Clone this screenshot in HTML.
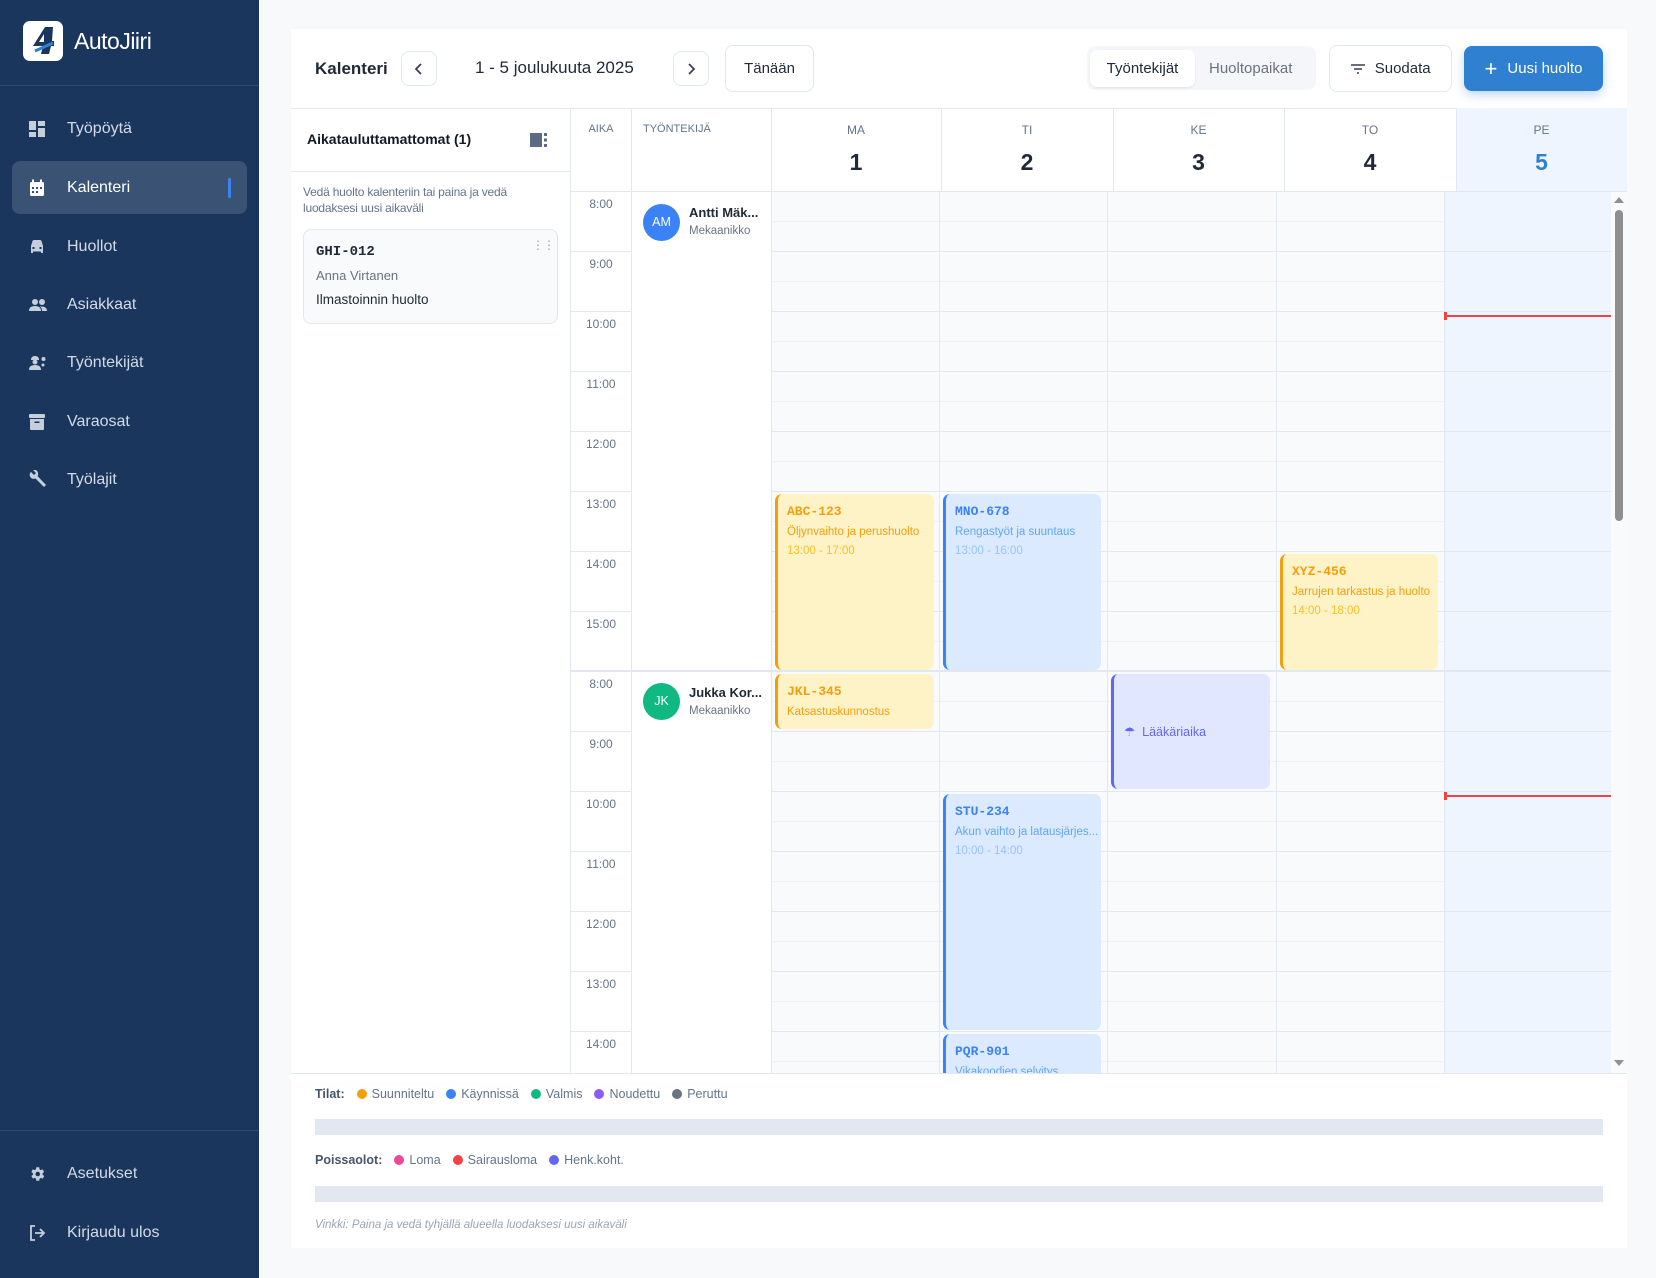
<!DOCTYPE html>
<html><head><meta charset="utf-8"><style>
*{box-sizing:border-box;margin:0;padding:0}
body{width:1656px;height:1278px;background:#f7f9fb;font-family:"Liberation Sans",sans-serif;position:relative;overflow:hidden;color:#1f2937}
.a{position:absolute}
.sb{left:0;top:0;width:259px;height:1278px;background:#1b365d}
.nav{position:absolute;left:12px;width:235px;height:53px;display:flex;align-items:center;color:#d3dbe6;font-size:16px}
.nav svg{position:absolute;left:16px}
.nav span{position:absolute;left:55px}
.btn{position:absolute;border:1px solid #e2e8f0;border-radius:8px;background:#fff;display:flex;align-items:center;justify-content:center;font-size:15px;color:#1f2937}
.hl{position:absolute;font-size:12px;color:#64748b;text-align:center}
.dn{position:absolute;font-size:23px;font-weight:bold;color:#1f2937;text-align:center}
.tl{position:absolute;left:571px;width:60px;text-align:center;font-size:12px;color:#64748b}
.ev{position:absolute;border-radius:7px;border-left:3px solid;padding:10px 0 0 9px;overflow:hidden;white-space:nowrap}
.ev b{display:block;font-family:"Liberation Mono",monospace;font-size:13px;margin-bottom:7px}
.ev i{display:block;font-style:normal;font-size:11.5px;margin-bottom:7px}
.dot{display:inline-block;width:10px;height:10px;border-radius:50%;margin:0 5px 0 12px;vertical-align:-1px}
.lg{font-size:12.5px;color:#64748b}
</style></head><body>
<div class="a sb"></div>
<div class="a" style="left:23px;top:21px;width:40px;height:40px;background:#fff;border-radius:7px"></div>
<svg class="a" style="left:23px;top:21px" width="40" height="40" viewBox="0 0 40 40"><path d="M22 6 L10 25 L20 25 L18 33 L26 33 L28 25 L31 25 L31 20 L29 20 L30 6 Z" fill="#1b365d"/><path d="M21 13 L16 21 L21 21 Z" fill="#fff"/><path d="M12 30 L30 22" stroke="#2f80d0" stroke-width="3"/></svg>
<div class="a" style="left:74px;top:28px;color:#fff;font-size:23px;font-weight:500;letter-spacing:-.5px">AutoJiiri</div>
<div class="a" style="left:0;top:85px;width:259px;height:1px;background:#2e4a70"></div>
<div class="nav" style="top:102px"><svg width="18" height="18" viewBox="0 0 18 18" fill="#c5cfdc"><rect x="1" y="1" width="7" height="9"/><rect x="10" y="1" width="7" height="5"/><rect x="10" y="8" width="7" height="9"/><rect x="1" y="12" width="7" height="5"/></svg><span>Työpöytä</span></div>
<div class="nav" style="top:161px;background:#3a5274;border-radius:8px;color:#fff"><svg width="18" height="18" viewBox="0 0 18 18" fill="#fff"><rect x="2" y="3" width="14" height="14" rx="1.5"/><rect x="4" y="0.5" width="2" height="4"/><rect x="12" y="0.5" width="2" height="4"/><g fill="#3a5274"><rect x="4" y="8" width="2" height="2"/><rect x="8" y="8" width="2" height="2"/><rect x="12" y="8" width="2" height="2"/><rect x="4" y="12" width="2" height="2"/><rect x="8" y="12" width="2" height="2"/></g></svg><span>Kalenteri</span><div class="a" style="left:216px;top:17px;width:3px;height:20px;background:#3b82f6;border-radius:2px"></div></div>
<div class="nav" style="top:220px"><svg width="18" height="18" viewBox="0 0 18 18" fill="#c5cfdc"><path d="M3 8 L4.5 3 Q5 2 6 2 H12 Q13 2 13.5 3 L15 8 V15 H13 V13.5 H5 V15 H3 Z"/><rect x="4.5" y="9" width="2" height="2" fill="#1b365d"/><rect x="11.5" y="9" width="2" height="2" fill="#1b365d"/></svg><span>Huollot</span></div>
<div class="nav" style="top:278px"><svg width="20" height="18" viewBox="0 0 20 18" fill="#c5cfdc"><circle cx="7" cy="6" r="3"/><circle cx="14" cy="6" r="3"/><path d="M1 15 Q1 10 7 10 Q13 10 13 15Z M12 10.5 Q19 10 19 15 H14 Q14 12 12 10.5Z"/></svg><span>Asiakkaat</span></div>
<div class="nav" style="top:336px"><svg width="20" height="18" viewBox="0 0 20 18" fill="#c5cfdc"><path d="M3 6 Q3 2 7 2 Q11 2 11 6Z"/><circle cx="7" cy="8" r="2.5"/><path d="M1 16 Q1 11 7 11 Q13 11 13 16Z"/><circle cx="15.5" cy="5" r="2"/><circle cx="15" cy="11" r="1.5"/></svg><span>Työntekijät</span></div>
<div class="nav" style="top:395px"><svg width="18" height="18" viewBox="0 0 18 18" fill="#c5cfdc"><rect x="1" y="1" width="16" height="4" rx="1"/><path d="M2 6 H16 V16 Q16 17 15 17 H3 Q2 17 2 16Z"/><rect x="6.5" y="8.5" width="5" height="1.5" fill="#1b365d"/></svg><span>Varaosat</span></div>
<div class="nav" style="top:453px"><svg width="20" height="20" viewBox="0 0 20 20" fill="#c5cfdc"><path d="M3 2 L6 5 L8 3 L5 0 Q9 -1 10 3 Q10.5 5 9.5 6 L18 15 L16 17 L7.5 8.5 Q5 9.5 3 8 Q1 6 2 3Z"/></svg><span>Työlajit</span></div>
<div class="a" style="left:0;top:1130px;width:259px;height:1px;background:#2e4a70"></div>
<div class="nav" style="top:1147px"><svg width="18" height="18" viewBox="0 0 24 24" fill="#c5cfdc"><path d="M19.4 13a7.5 7.5 0 0 0 0-2l2.1-1.6-2-3.5-2.5 1a7 7 0 0 0-1.7-1L15 3h-4l-.4 2.9a7 7 0 0 0-1.7 1l-2.5-1-2 3.5L6.6 11a7.5 7.5 0 0 0 0 2l-2.1 1.6 2 3.5 2.5-1a7 7 0 0 0 1.7 1L11 21h4l.4-2.9a7 7 0 0 0 1.7-1l2.5 1 2-3.5Z"/><circle cx="13" cy="12" r="3" fill="#1b365d"/></svg><span>Asetukset</span></div>
<div class="nav" style="top:1206px"><svg width="18" height="18" viewBox="0 0 18 18" fill="none" stroke="#c5cfdc" stroke-width="1.8"><path d="M7 2 H3 V16 H7"/><path d="M7 9 H16 M12 5 L16 9 L12 13"/></svg><span>Kirjaudu ulos</span></div>

<!-- main panel -->
<div class="a" style="left:291px;top:29px;width:1336px;height:1219px;background:#fff"></div>
<div class="a" style="left:315px;top:59px;font-size:17px;font-weight:bold">Kalenteri</div>
<div class="btn" style="left:401px;top:51px;width:36px;height:35px"><svg width="10" height="14" viewBox="0 0 10 14" fill="none" stroke="#374151" stroke-width="1.8"><path d="M7 2 L2 7 L7 12"/></svg></div>
<div class="a" style="left:475px;top:58px;font-size:17px;font-weight:500">1 - 5 joulukuuta 2025</div>
<div class="btn" style="left:673px;top:51px;width:36px;height:35px"><svg width="10" height="14" viewBox="0 0 10 14" fill="none" stroke="#374151" stroke-width="1.8"><path d="M3 2 L8 7 L3 12"/></svg></div>
<div class="btn" style="left:725px;top:45px;width:89px;height:47px">Tänään</div>
<div class="a" style="left:1087px;top:46px;width:229px;height:44px;background:#f4f6f9;border-radius:8px"></div>
<div class="a" style="left:1090px;top:50px;width:105px;height:37px;background:#fff;border-radius:7px;box-shadow:0 1px 2px rgba(0,0,0,.08);font-size:15px;text-align:center;line-height:37px">Työntekijät</div>
<div class="a" style="left:1209px;top:50px;font-size:15px;line-height:37px;color:#6b7280">Huoltopaikat</div>
<div class="btn" style="left:1329px;top:45px;width:123px;height:47px"><svg width="16" height="12" viewBox="0 0 16 12" stroke="#374151" stroke-width="1.6"><path d="M1 2H15M4 6H12M7 10H9"/></svg>&nbsp;&nbsp;Suodata</div>
<div class="a" style="left:1464px;top:46px;width:139px;height:45px;background:#2f80d0;border-radius:8px;color:#fff;font-size:15px;display:flex;align-items:center;justify-content:center;box-shadow:0 4px 10px rgba(47,128,208,.3)"><span style="font-size:22px;font-weight:300;margin-right:10px;line-height:1">+</span>Uusi huolto</div>
<div class="a" style="left:291px;top:108px;width:1336px;height:1px;background:#e2e8f0"></div>

<!-- left panel -->
<div class="a" style="left:570px;top:108px;width:1px;height:965px;background:#e2e8f0"></div>
<div class="a" style="left:307px;top:131px;font-size:14px;font-weight:bold;color:#111827">Aikatauluttamattomat (1)</div>
<svg class="a" style="left:530px;top:133px" width="18" height="14" viewBox="0 0 18 14" fill="#5b6b82"><rect x="0" y="0" width="12" height="14"/><rect x="14" y="0" width="3" height="3"/><rect x="14" y="5.5" width="3" height="3"/><rect x="14" y="11" width="3" height="3"/></svg>
<div class="a" style="left:291px;top:171px;width:280px;height:1px;background:#e2e8f0"></div>
<div class="a" style="left:303px;top:184px;font-size:12px;color:#64748b;line-height:16px;width:250px;letter-spacing:-.2px">Vedä huolto kalenteriin tai paina ja vedä luodaksesi uusi aikaväli</div>
<div class="a" style="left:303px;top:229px;width:255px;height:95px;border:1px solid #e2e8f0;border-radius:8px;background:#f8fafc"></div>
<div class="a" style="left:316px;top:244px;font-family:'Liberation Mono',monospace;font-weight:bold;font-size:14px;color:#1f2937">GHI-012</div>
<div class="a" style="left:532px;top:242px;font-size:12px;color:#9ca3af;letter-spacing:-1px;line-height:6px">⋮⋮</div>
<div class="a" style="left:316px;top:268px;font-size:13px;color:#6b7280">Anna Virtanen</div>
<div class="a" style="left:316px;top:292px;font-size:13.5px;color:#1f2937">Ilmastoinnin huolto</div>

<!-- header -->
<div class="a" style="left:631px;top:108px;width:1px;height:965px;background:#e2e8f0"></div>
<div class="a" style="left:771px;top:108px;width:1px;height:84px;background:#e2e8f0"></div>
<div class="a" style="left:941px;top:108px;width:1px;height:84px;background:#e2e8f0"></div>
<div class="a" style="left:1113px;top:108px;width:1px;height:84px;background:#e2e8f0"></div>
<div class="a" style="left:1284px;top:108px;width:1px;height:84px;background:#e2e8f0"></div>
<div class="a" style="left:1456px;top:108px;width:171px;height:84px;background:#eef5fe;border-left:1px solid #e2e8f0"></div>
<div class="hl" style="left:571px;top:123px;width:60px;font-size:11px">AIKA</div>
<div class="hl" style="left:643px;top:123px;font-size:11px">TYÖNTEKIJÄ</div>
<div class="hl" style="left:771px;top:123px;width:170px">MA</div><div class="dn" style="left:771px;top:149px;width:170px">1</div>
<div class="hl" style="left:941px;top:123px;width:172px">TI</div><div class="dn" style="left:941px;top:149px;width:172px">2</div>
<div class="hl" style="left:1113px;top:123px;width:171px">KE</div><div class="dn" style="left:1113px;top:149px;width:171px">3</div>
<div class="hl" style="left:1284px;top:123px;width:172px">TO</div><div class="dn" style="left:1284px;top:149px;width:172px">4</div>
<div class="hl" style="left:1456px;top:123px;width:171px">PE</div><div class="dn" style="left:1456px;top:149px;width:171px;color:#2f80d0">5</div>
<div class="a" style="left:571px;top:191px;width:1056px;height:1px;background:#e2e8f0"></div>

<!-- grid body -->
<div class="a" style="left:771px;top:192px;width:840px;height:881px;background-color:#f8fafc;background-image:repeating-linear-gradient(to bottom,transparent 0,transparent 29px,#eef1f5 29px,#eef1f5 30px,transparent 30px,transparent 59px,#e2e8f0 59px,#e2e8f0 60px)"></div>
<div class="a" style="left:1444px;top:192px;width:167px;height:881px;background-color:#eef5fe;background-image:repeating-linear-gradient(to bottom,transparent 0,transparent 59px,#e2e8f0 59px,#e2e8f0 60px)"></div>
<div class="a" style="left:571px;top:192px;width:60px;height:881px;background-image:repeating-linear-gradient(to bottom,transparent 0,transparent 59px,#e2e8f0 59px,#e2e8f0 60px)"></div>
<div class="a" style="left:771px;top:192px;width:1px;height:881px;background:#e2e8f0"></div>
<div class="a" style="left:939px;top:192px;width:1px;height:881px;background:#e2e8f0"></div>
<div class="a" style="left:1107px;top:192px;width:1px;height:881px;background:#e2e8f0"></div>
<div class="a" style="left:1276px;top:192px;width:1px;height:881px;background:#e2e8f0"></div>
<div class="a" style="left:1444px;top:192px;width:1px;height:881px;background:#e2e8f0"></div>
<div class="a" style="left:571px;top:670px;width:1040px;height:2px;background:#e2e8f0"></div>

<div class="tl" style="top:197px">8:00</div><div class="tl" style="top:257px">9:00</div><div class="tl" style="top:317px">10:00</div><div class="tl" style="top:377px">11:00</div><div class="tl" style="top:437px">12:00</div><div class="tl" style="top:497px">13:00</div><div class="tl" style="top:557px">14:00</div><div class="tl" style="top:617px">15:00</div>
<div class="tl" style="top:677px">8:00</div><div class="tl" style="top:737px">9:00</div><div class="tl" style="top:797px">10:00</div><div class="tl" style="top:857px">11:00</div><div class="tl" style="top:917px">12:00</div><div class="tl" style="top:977px">13:00</div><div class="tl" style="top:1037px">14:00</div>

<div class="a" style="left:643px;top:204px;width:37px;height:37px;border-radius:50%;background:#3b82f6;color:#fff;font-size:12.5px;text-align:center;line-height:37px">AM</div>
<div class="a" style="left:689px;top:205px;font-size:13px;font-weight:bold">Antti Mäk...</div>
<div class="a" style="left:689px;top:225px;font-size:11.5px;color:#6b7280">Mekaanikko</div>
<div class="a" style="left:643px;top:683px;width:37px;height:37px;border-radius:50%;background:#10b981;color:#fff;font-size:12.5px;text-align:center;line-height:37px">JK</div>
<div class="a" style="left:689px;top:685px;font-size:13px;font-weight:bold">Jukka Kor...</div>
<div class="a" style="left:689px;top:705px;font-size:11.5px;color:#6b7280">Mekaanikko</div>

<div class="a" style="left:1444px;top:315px;width:167px;height:2px;background:#ef4444"></div><div class="a" style="left:1444px;top:312px;width:3px;height:8px;background:#ef4444"></div>
<div class="a" style="left:1444px;top:795px;width:167px;height:2px;background:#ef4444"></div><div class="a" style="left:1444px;top:792px;width:3px;height:8px;background:#ef4444"></div>

<div class="a" style="left:771px;top:192px;width:840px;height:881px;overflow:hidden">
<div class="ev" style="left:4px;top:302px;width:159px;height:176px;background:#fef3c7;border-color:#f59e0b;color:#f59e0b"><b>ABC-123</b><i>Öljynvaihto ja perushuolto</i><i style="color:#fbbf24">13:00 - 17:00</i></div>
<div class="ev" style="left:172px;top:302px;width:158px;height:176px;background:#dbeafe;border-color:#3b82f6;color:#3b82f6"><b>MNO-678</b><i style="color:#60a5fa">Rengastyöt ja suuntaus</i><i style="color:#93c5fd">13:00 - 16:00</i></div>
<div class="ev" style="left:509px;top:362px;width:158px;height:116px;background:#fef3c7;border-color:#f59e0b;color:#f59e0b"><b>XYZ-456</b><i>Jarrujen tarkastus ja huolto</i><i style="color:#fbbf24">14:00 - 18:00</i></div>
<div class="ev" style="left:4px;top:482px;width:159px;height:55px;background:#fef3c7;border-color:#f59e0b;color:#f59e0b"><b>JKL-345</b><i>Katsastuskunnostus</i></div>
<div class="ev" style="left:340px;top:482px;width:159px;height:115px;background:#e0e7ff;border-color:#6366f1;color:#6366f1;padding:0 0 0 10px;display:flex;align-items:center;font-size:12.5px">☂&nbsp; Lääkäriaika</div>
<div class="ev" style="left:172px;top:602px;width:158px;height:236px;background:#dbeafe;border-color:#3b82f6;color:#3b82f6"><b>STU-234</b><i style="color:#60a5fa">Akun vaihto ja latausjärjes...</i><i style="color:#93c5fd">10:00 - 14:00</i></div>
<div class="ev" style="left:172px;top:842px;width:158px;height:100px;background:#dbeafe;border-color:#3b82f6;color:#3b82f6"><b>PQR-901</b><i style="color:#60a5fa">Vikakoodien selvitys</i></div>
</div>
<!-- scrollbar -->
<div class="a" style="left:1611px;top:192px;width:16px;height:881px;background:#f8fafc"></div>
<div class="a" style="left:1615px;top:210px;width:8px;height:311px;background:#8f8f8f;border-radius:4px"></div>
<div class="a" style="left:1614px;top:197px;width:0;height:0;border-left:5px solid transparent;border-right:5px solid transparent;border-bottom:6px solid #8f8f8f"></div>
<div class="a" style="left:1614px;top:1060px;width:0;height:0;border-left:5px solid transparent;border-right:5px solid transparent;border-top:6px solid #8f8f8f"></div>
<div class="a" style="left:291px;top:1073px;width:1336px;height:1px;background:#e2e8f0"></div>

<!-- legend -->
<div class="a lg" style="left:315px;top:1087px"><b style="color:#475569">Tilat:</b><span class="dot" style="background:#f59e0b"></span>Suunniteltu<span class="dot" style="background:#3b82f6"></span>Käynnissä<span class="dot" style="background:#10b981"></span>Valmis<span class="dot" style="background:#8b5cf6"></span>Noudettu<span class="dot" style="background:#6b7280"></span>Peruttu</div>
<div class="a" style="left:315px;top:1119px;width:1288px;height:16px;background:#e2e8f0"></div>
<div class="a lg" style="left:315px;top:1153px"><b style="color:#475569">Poissaolot:</b><span class="dot" style="background:#ec4899"></span>Loma<span class="dot" style="background:#ef4444"></span>Sairausloma<span class="dot" style="background:#6366f1"></span>Henk.koht.</div>
<div class="a" style="left:315px;top:1186px;width:1288px;height:16px;background:#e2e8f0"></div>
<div class="a" style="left:315px;top:1219px;font-size:11.5px;color:#9ca3af;font-style:italic">Vinkki: Paina ja vedä tyhjällä alueella luodaksesi uusi aikaväli</div>
</body></html>
